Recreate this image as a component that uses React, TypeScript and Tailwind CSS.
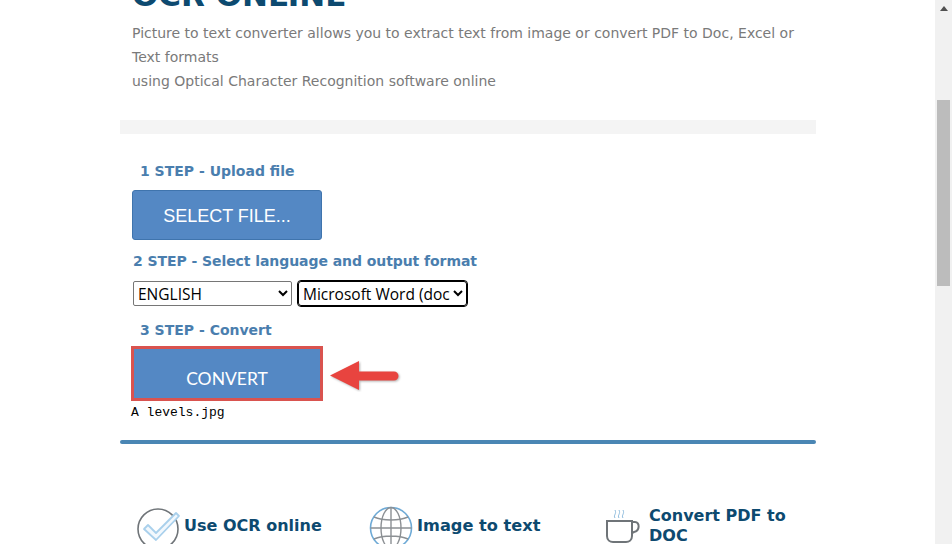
import { useEffect, useRef } from "react";

function CheckIcon() {
  return (
    <svg width="46" height="46" viewBox="0 0 46 46" fill="none" className="shrink-0">
      <circle cx="22" cy="23" r="20" stroke="#6f7478" strokeWidth="1.6" />
      <path
        d="M8 23l4-4 8 8L40 7l3 3-23 24z"
        fill="#f2f8fd"
        stroke="#a9d0ec"
        strokeWidth="1.8"
        strokeLinejoin="round"
      />
    </svg>
  );
}

function GlobeIcon() {
  return (
    <svg width="44" height="44" viewBox="0 0 44 44" fill="none" className="shrink-0">
      <circle cx="22" cy="22" r="20.5" stroke="#6eaad6" strokeWidth="1.6" />
      <ellipse cx="22" cy="22" rx="10" ry="20.5" stroke="#8c9094" strokeWidth="1.4" />
      <path d="M22 1.5v41M1.5 22h41M5 11c9 4 25 4 34 0M5 33c9-4 25-4 34 0" stroke="#8c9094" strokeWidth="1.4" />
    </svg>
  );
}

function CupIcon() {
  return (
    <svg width="37" height="36" viewBox="0 0 37 36" fill="none" className="mt-[3px] shrink-0">
      <path d="M11 9c-2-3 2-4 0-8M15 9c-2-3 2-4 0-8M19 9c-2-3 2-4 0-8" stroke="#8dbbdd" strokeWidth="1" />
      <path d="M3 12h25v15c0 4-3 6-6 6H9c-3 0-6-2-6-6z" stroke="#6f7478" strokeWidth="2" />
      <path d="M28 13h3c5 0 5 9-1 10l-2 1" stroke="#6f7478" strokeWidth="2" />
      <path d="M0 35.500h34" stroke="#c4c7ca" strokeWidth="1" />
    </svg>
  );
}

function Arrow() {
  return (
    <svg width="72" height="32" viewBox="0 0 72 32" className="mt-[4px] shrink-0">
      <path
        d="M0 15.500L29 1v10.500h35a4.500 4.500 0 0 1 0 9H29V30z"
        fill="#e8443f"
        style={{ filter: "drop-shadow(1px 1px 1px rgba(0,0,0,0.3))" }}
      />
    </svg>
  );
}

function StepTitle({ children, className }: { children: string; className: string }) {
  return <h3 className={`text-[14px] font-bold leading-5 text-[#4a7eae] ${className}`}>{children}</h3>;
}

export default function App() {
  const formatRef = useRef<HTMLSelectElement>(null);

  useEffect(() => {
    formatRef.current?.focus();
  }, []);

  return (
    <div className="flex h-[544px] w-[952px] overflow-hidden bg-white font-['DejaVu_Sans',sans-serif]">
      <div className="flex-1">
        <main className="ml-[120px] w-[696px]">
          <div className="-mt-[20px] px-3">
            <h1 className="text-[31px] font-bold leading-[30px] text-[#0d4a70]">OCR ONLINE</h1>
            <p className="mt-[11px] text-[14px] leading-6 text-[#7a7a7a]">
              Picture to text converter allows you to extract text from image or convert PDF to Doc, Excel or Text formats
              <br />
              using Optical Character Recognition software online
            </p>
          </div>

          <div className="mt-[27px] h-[14px] bg-[#f4f4f4]" />

          <StepTitle className="mt-[27px] pl-5">1 STEP - Upload file</StepTitle>
          <div className="mt-[9px] pl-3">
            <button className="h-[50px] w-[190px] rounded-[3px] border border-[#3f74ad] bg-[#5488c4] pt-[2px] font-['Liberation_Sans',sans-serif] text-[18px] text-white">
              SELECT FILE...
            </button>
          </div>

          <StepTitle className="mt-[11px] pl-[13px] tracking-[-0.07px]">2 STEP - Select language and output format</StepTitle>
          <div className="mt-[10px] flex items-center gap-[6px] pl-[13px]">
            <select className="h-[25px] w-[159px] rounded-[2px] border border-[#767676] bg-white font-['Open_Sans',sans-serif] text-[15.500px] text-black">
              <option>ENGLISH</option>
            </select>
            <select
              ref={formatRef}
              className="h-[25px] w-[169px] rounded-[3px] border border-black bg-white font-['Open_Sans',sans-serif] text-[15.500px] text-black outline-1 outline-black"
            >
              <option>Microsoft Word (docx)</option>
            </select>
          </div>

          <StepTitle className="mt-[14px] pl-5">3 STEP - Convert</StepTitle>
          <div className="mt-[6px] flex items-center gap-[7px] pl-[11px]">
            <button className="h-[55px] w-[192px] border-[3px] border-[#d9534f] bg-[#5488c4] pt-[11px] font-['Lato',sans-serif] text-[17.500px] text-white">
              CONVERT
            </button>
            <Arrow />
          </div>
          <p className="mt-[4px] pl-[11px] font-['Liberation_Mono',monospace] text-[13px] leading-4 text-black">A levels.jpg</p>

          <div className="mt-[19px] h-1 rounded-sm bg-[#4a86b4]" />

          <div className="mt-[62px] flex items-start">
            <div className="flex w-[233px] items-start pl-4">
              <CheckIcon />
              <span className="ml-[2px] mt-[8px] text-[16px] font-bold leading-6 text-[#0d4a70]">Use OCR online</span>
            </div>
            <div className="flex w-[251px] items-start pl-4">
              <GlobeIcon />
              <span className="ml-1 mt-[8px] text-[16.200px] font-bold leading-6 text-[#0d4a70]">Image to text</span>
            </div>
            <div className="flex items-start">
              <CupIcon />
              <span className="ml-2 w-[150px] text-[16px] font-bold leading-5 text-[#0d4a70]">Convert PDF to DOC</span>
            </div>
          </div>
        </main>
      </div>

      <aside className="flex h-full w-[17px] shrink-0 flex-col items-center bg-[#f1f1f1]">
        <div className="flex h-[17px] items-center justify-center">
          <div className="h-0 w-0 border-x-[4px] border-b-[5px] border-x-transparent border-b-[#505050]" />
        </div>
        <div className="mt-[83px] h-[186px] w-[13px] bg-[#bcbcbc]" />
      </aside>
    </div>
  );
}
